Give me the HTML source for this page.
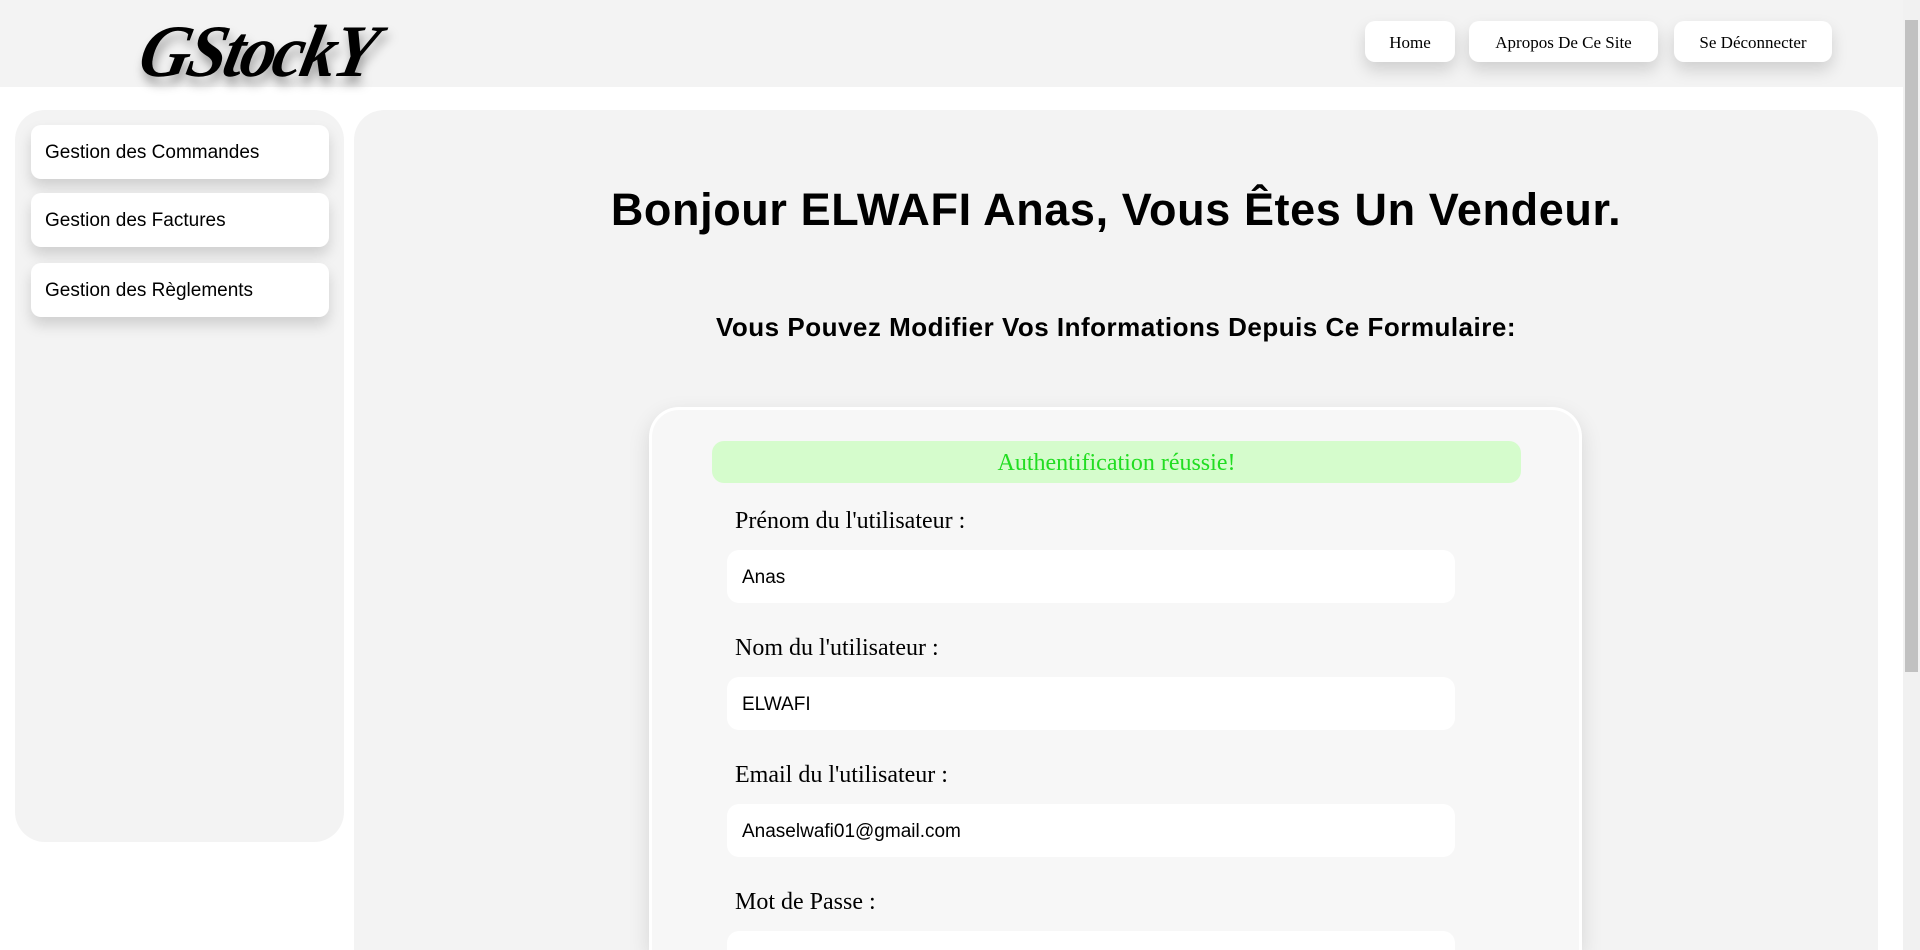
<!DOCTYPE html>
<html><head><meta charset="utf-8"><style>
*{box-sizing:border-box;margin:0;padding:0}
html,body{width:1920px;height:950px;overflow:hidden;background:#fff;font-family:"Liberation Sans",sans-serif}
#wrap{position:relative;width:1920px;height:950px;overflow:hidden}
.header{position:absolute;left:0;top:0;width:1903px;height:87px;background:#f3f3f3}
.logo{position:absolute;left:150px;top:10px;font-family:"Liberation Serif",serif;font-style:italic;font-weight:bold;font-size:74px;letter-spacing:-3px;color:#000;text-shadow:4px 8px 10px rgba(0,0,0,.35);transform:skewX(-12deg) scaleX(0.95);transform-origin:left top}
.nav{position:absolute;top:21px;height:41px;background:#fff;border-radius:10px;box-shadow:0 8px 16px rgba(0,0,0,.15);font-family:"Liberation Serif",serif;font-size:17px;display:flex;align-items:center;justify-content:center;padding-top:3px}
.side{position:absolute;left:15px;top:110px;width:329px;height:732px;background:#f3f3f3;border-radius:30px}
.item{position:absolute;left:16px;width:298px;height:54px;background:#fff;border-radius:10px;box-shadow:0 8px 14px rgba(0,0,0,.15);font-size:19px;padding-left:14px;line-height:56px}
.main{position:absolute;left:354px;top:110px;width:1524px;height:840px;background:#f3f3f3;border-radius:30px 30px 0 0}
h1{position:absolute;left:354px;width:1524px;top:184px;text-align:center;font-size:45px;font-weight:bold;letter-spacing:0.6px}
h2{position:absolute;left:354px;width:1524px;top:312px;text-align:center;font-size:26px;font-weight:bold;letter-spacing:0.5px}
.card{position:absolute;left:649px;top:407px;width:933px;height:543px;background:#f7f7f7;border:3px solid #fff;border-bottom:none;border-radius:30px 30px 0 0;box-shadow:0 8px 22px rgba(0,0,0,.12)}
.alert{position:absolute;left:712px;top:441px;width:809px;height:42px;background:#d5fccc;border-radius:12px;color:#22dd22;font-family:"Liberation Serif",serif;font-size:24px;text-align:center;line-height:44px}
.lbl{position:absolute;left:735px;font-family:"Liberation Serif",serif;font-size:24px}
.inp{position:absolute;left:727px;width:728px;height:53px;background:#fff;border-radius:12px;font-size:19px;padding-left:15px;line-height:55px}
.sb{position:absolute;left:1903px;top:0;width:17px;height:950px;background:#f1f1f1}
.thumb{position:absolute;left:1905px;top:20px;width:13px;height:652px;background:#c1c1c1}
</style></head><body><div id="wrap">
<div class="header"><div class="logo">GStockY</div>
<div class="nav" style="left:1365px;width:90px">Home</div>
<div class="nav" style="left:1469px;width:189px">Apropos De Ce Site</div>
<div class="nav" style="left:1674px;width:158px">Se Déconnecter</div>
</div>
<div class="side">
<div class="item" style="top:15px">Gestion des Commandes</div>
<div class="item" style="top:83px">Gestion des Factures</div>
<div class="item" style="top:153px">Gestion des Règlements</div>
</div>
<div class="main"></div>
<h1>Bonjour ELWAFI Anas, Vous Êtes Un Vendeur.</h1>
<h2>Vous Pouvez Modifier Vos Informations Depuis Ce Formulaire:</h2>
<div class="card"></div>
<div class="alert">Authentification réussie!</div>
<div class="lbl" style="top:508px">Prénom du l'utilisateur :</div>
<div class="inp" style="top:550px">Anas</div>
<div class="lbl" style="top:635px">Nom du l'utilisateur :</div>
<div class="inp" style="top:677px">ELWAFI</div>
<div class="lbl" style="top:762px">Email du l'utilisateur :</div>
<div class="inp" style="top:804px">Anaselwafi01@gmail.com</div>
<div class="lbl" style="top:889px">Mot de Passe :</div>
<div class="inp" style="top:931px;height:19px;border-radius:12px 12px 0 0"></div>
<div class="sb"></div><div class="thumb"></div>
</div></body></html>
